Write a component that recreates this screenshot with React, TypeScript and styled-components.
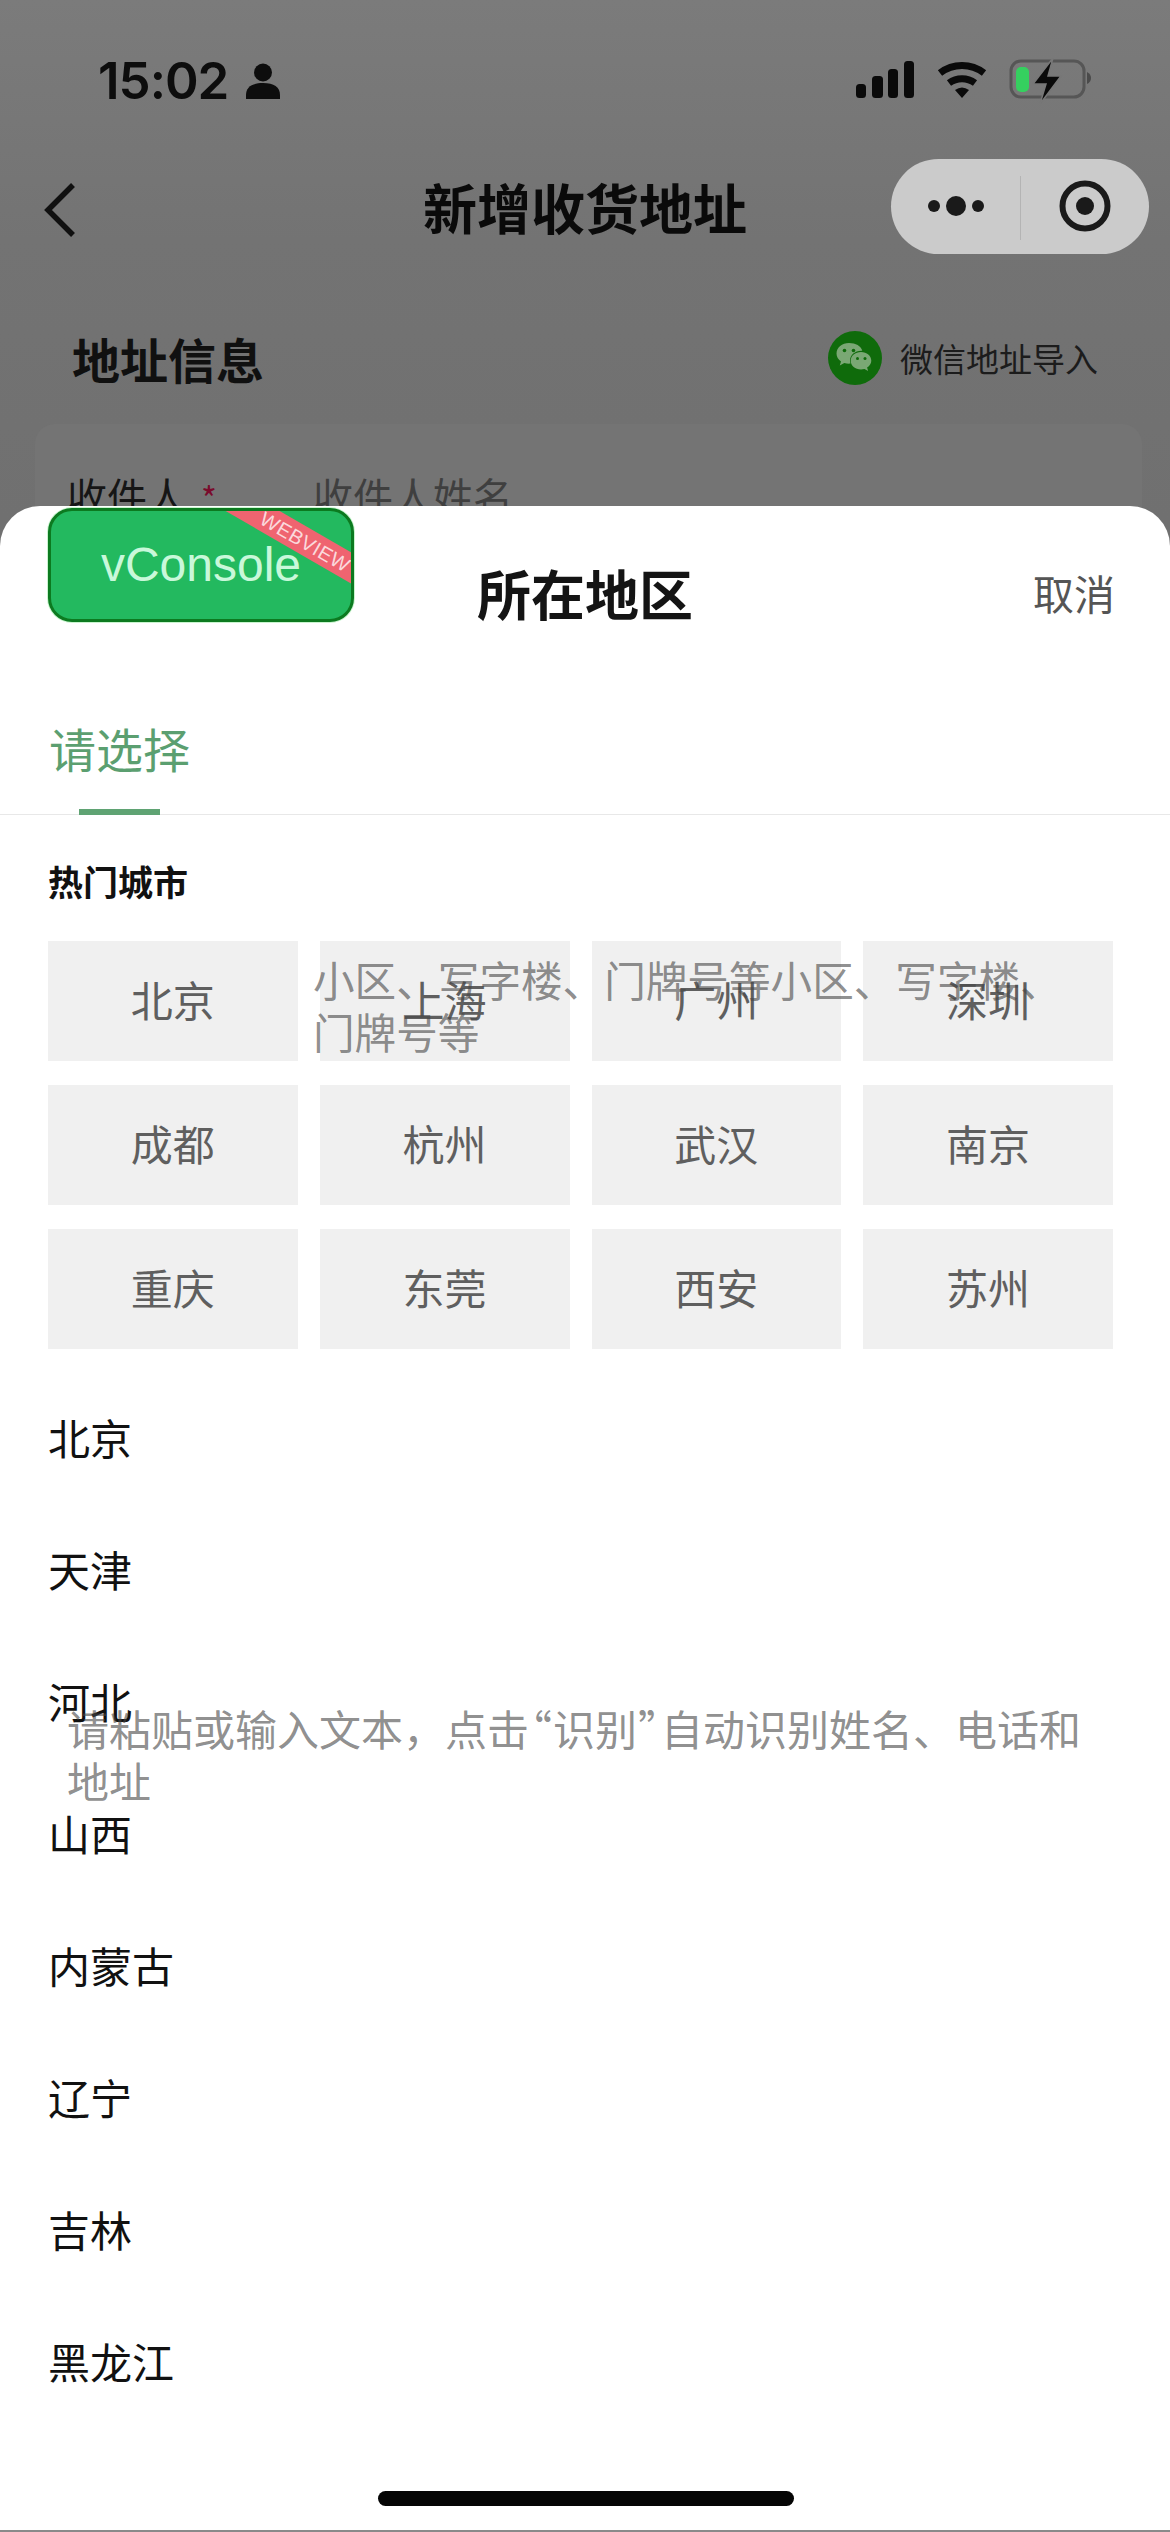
import React from "react";
import styled, { createGlobalStyle } from "styled-components";

const CJK = `"Noto Sans CJK SC", "Noto Sans", sans-serif`;

const Global = createGlobalStyle`
  html, body { margin: 0; padding: 0; background: #fff; }
  * { box-sizing: border-box; }
`;

const Page = styled.div`
  position: relative;
  width: 1170px;
  height: 2532px;
  overflow: hidden;
  font-family: ${CJK};
  background: linear-gradient(180deg, #7b7b7b 0, #737373 240px, #707070 520px);
`;

const StatusBar = styled.div`
  height: 159px;
  padding: 54px 0 0 98px;
  display: flex;
  align-items: flex-start;
  justify-content: space-between;
`;
const Clock = styled.div`
  display: flex;
  align-items: center;
  gap: 18px;
  font: 600 51px/54px Inter, "Liberation Sans", sans-serif;
  letter-spacing: -1px;
  color: #0d0d0d;
`;
const StatusIcons = styled.svg`
  display: block;
  margin: 4px 74px 0 0;
`;

const NavBar = styled.div`
  position: relative;
  height: 95px;
  padding: 0 21px 0 44px;
  display: flex;
  align-items: center;
  justify-content: space-between;
`;
const NavTitle = styled.div`
  position: absolute;
  left: 0;
  right: 0;
  text-align: center;
  font-size: 54px;
  line-height: 95px;
  font-weight: 700;
  color: #0a0a0a;
`;
const BackIcon = styled.svg`
  display: block;
  margin-top: 6px;
`;
const Capsule = styled.div`
  width: 258px;
  height: 95px;
  border-radius: 48px;
  background: #cbcbcb;
`;

const SectionHead = styled.div`
  margin-top: 59px;
  height: 90px;
  padding: 0 72px;
  display: flex;
  align-items: center;
  justify-content: space-between;
`;
const SectionTitle = styled.div`
  font-size: 48px;
  font-weight: 700;
  color: #101010;
`;
const ImportLink = styled.div`
  display: flex;
  align-items: center;
  gap: 18px;
  font-size: 33px;
  color: #1c1c1c;
`;

const FormCard = styled.div`
  margin: 21px 28px 0 35px;
  height: 300px;
  padding: 43px 32px 0;
  border-radius: 20px;
  background: #747474;
  display: flex;
  align-items: flex-start;
  font-size: 40px;
  line-height: 56px;
`;
const FieldLabel = styled.span`
  width: 246px;
  color: #161616;
`;
const Star = styled.span`
  margin-left: 14px;
  color: #7a0b2c;
  font-size: 34px;
`;
const FieldHint = styled.span`
  color: #3f3f3f;
`;

const Sheet = styled.div`
  position: absolute;
  left: 0;
  right: 0;
  top: 506px;
  bottom: 2px;
  background: #fff;
  border-radius: 40px 40px 0 0;
`;
const BottomEdge = styled.div`
  position: absolute;
  left: 0;
  right: 0;
  bottom: 0;
  height: 2px;
  background: #8a8a8a;
`;
const SheetHead = styled.div`
  position: relative;
  height: 178px;
  padding: 0 55px 6px 0;
  display: flex;
  align-items: center;
  justify-content: flex-end;
`;
const SheetTitle = styled.div`
  position: absolute;
  left: 0;
  right: 0;
  text-align: center;
  font-size: 54px;
  font-weight: 700;
  color: #141414;
`;
const Cancel = styled.div`
  font-size: 41px;
  color: #555;
`;
const Tabs = styled.div`
  height: 131px;
  padding: 30px 0 0 49px;
  border-bottom: 1px solid #e8e8e8;
  position: relative;
`;
const Tab = styled.div`
  font-size: 47px;
  line-height: 68px;
  color: #5b9f70;
`;
const TabLine = styled.div`
  position: absolute;
  left: 79px;
  bottom: -1px;
  width: 81px;
  height: 6px;
  background: #5fa373;
`;
const HotTitle = styled.div`
  margin-top: 41px;
  padding-left: 48px;
  font-size: 35px;
  line-height: 50px;
  font-weight: 700;
  color: #111;
`;
const HotGrid = styled.div`
  margin: 35px 57px 0 48px;
  display: grid;
  grid-template-columns: repeat(4, 1fr);
  gap: 24px 22px;
`;
const HotCell = styled.div`
  height: 120px;
  padding-bottom: 6px;
  background: #f0f0f0;
  display: flex;
  align-items: center;
  justify-content: center;
  font-size: 42px;
  color: #5f5f5f;
`;
const CityList = styled.div`
  margin-top: 24px;
  padding-left: 48px;
`;
const CityRow = styled.div`
  height: 132px;
  padding-bottom: 6px;
  display: flex;
  align-items: center;
  font-size: 42px;
  color: #111;
`;
const HomeBar = styled.div`
  position: absolute;
  left: 378px;
  bottom: 24px;
  width: 416px;
  height: 15px;
  border-radius: 8px;
  background: #050505;
`;

const Ghost = styled.div<{ $left: number; $top: number; $width: number; $size: number }>`
  position: absolute;
  left: ${(p) => p.$left}px;
  top: ${(p) => p.$top}px;
  width: ${(p) => p.$width}px;
  font-size: ${(p) => p.$size}px;
  line-height: 52px;
  color: rgba(70, 70, 70, 0.62);
`;
const Quote = styled.span`
  font-feature-settings: "palt";
  margin: 0 1.5px;
`;

const VConsole = styled.div`
  position: absolute;
  left: 48px;
  top: 508px;
  width: 306px;
  height: 114px;
  border: 3px solid #0c7a20;
  border-radius: 24px;
  background: #23b95f;
  box-shadow: 0 0 0 1px #c9f5cf;
  overflow: hidden;
  display: flex;
  align-items: center;
  justify-content: center;
  font: 400 48px/1 "Liberation Sans", Arial, sans-serif;
  color: #c9f8da;
`;
const Ribbon = styled.div`
  position: absolute;
  left: 146px;
  top: 15px;
  width: 210px;
  height: 27px;
  transform: rotate(30deg);
  background: #ef6470;
  display: flex;
  align-items: center;
  justify-content: center;
  padding-left: 8px;
  font: 400 20px/1 "Liberation Sans", Arial, sans-serif;
  letter-spacing: 0.5px;
  color: #fbd9dc;
`;

const hot = ["北京", "上海", "广州", "深圳", "成都", "杭州", "武汉", "南京", "重庆", "东莞", "西安", "苏州"];
const cities = ["北京", "天津", "河北", "山西", "内蒙古", "辽宁", "吉林", "黑龙江"];

const Person = () => (
  <svg width="34" height="36" viewBox="0 0 34 36">
    <circle cx="17" cy="9.5" r="9" fill="#0d0d0d" />
    <path d="M0 36v-4c0-8 6-12 17-12s17 4 17 12v4z" fill="#0d0d0d" />
  </svg>
);

const Status = () => (
  <StatusIcons width="240" height="46" viewBox="856 56 240 46">
    <rect x="856" y="82" width="10" height="14" rx="3.500" fill="#0a0a0a" />
    <rect x="872" y="74" width="11" height="22" rx="3.500" fill="#0a0a0a" />
    <rect x="888" y="67" width="10" height="29" rx="3.500" fill="#0a0a0a" />
    <rect x="904" y="59" width="10" height="37" rx="3.500" fill="#0a0a0a" />
    <path d="M940 71a36 36 0 0 1 44 0" fill="none" stroke="#0a0a0a" strokeWidth="7" />
    <path d="M949 81a22 22 0 0 1 26 0" fill="none" stroke="#0a0a0a" strokeWidth="7" />
    <path d="M955 88q7-5 14 0l-7 8z" fill="#0a0a0a" />
    <rect x="1011" y="59" width="73" height="36" rx="10" fill="none" stroke="#565656" strokeWidth="3" />
    <rect x="1016" y="65" width="13" height="25" rx="5" fill="#35d05f" />
    <path d="M1087 70q4 2 4 6t-4 6z" fill="#4a4a4a" />
    <path d="M1053 56l-20 26h13l-6 20 21-28h-13z" fill="#0a0a0a" stroke="#777" strokeWidth="1.500" />
  </StatusIcons>
);

const Back = () => (
  <BackIcon width="32" height="56" viewBox="0 0 32 56">
    <path d="M29 3 4 28l25 25" fill="none" stroke="#101010" strokeWidth="5.500" />
  </BackIcon>
);

const CapsuleArt = () => (
  <svg width="258" height="95" viewBox="891 159 258 95">
    <circle cx="934" cy="206" r="6" fill="#1a1a1a" />
    <circle cx="956" cy="206" r="10" fill="#1a1a1a" />
    <circle cx="978" cy="206" r="6" fill="#1a1a1a" />
    <rect x="1020" y="176" width="1" height="64" fill="#b4b4b4" />
    <circle cx="1085" cy="206" r="22.500" fill="none" stroke="#1a1a1a" strokeWidth="6" />
    <circle cx="1085" cy="206" r="9" fill="#1a1a1a" />
  </svg>
);

const WeChat = () => (
  <svg width="54" height="54" viewBox="0 0 54 54">
    <circle cx="27" cy="27" r="27" fill="#0f6b0b" />
    <path d="M21 12c-7 0-12.500 4.500-12.500 10.500 0 3.300 1.700 6 4.500 8l-1.200 4 4.500-2.400c1.500.4 3 .6 4.700.6.500 0 1 0 1.500-.1-.3-1-.5-2-.5-3 0-5.500 5-9.800 11.300-9.800h1C33 15 27.700 12 21 12z" fill="#7aa874" />
    <path d="M33 21c-5.800 0-10.300 3.800-10.300 8.700s4.500 8.700 10.300 8.700c1.200 0 2.400-.2 3.500-.5l3.600 2-1-3.400c2.500-1.600 4.200-4.100 4.200-6.800 0-4.900-4.500-8.700-10.300-8.700z" fill="#7aa874" />
    <circle cx="16.500" cy="19.500" r="1.800" fill="#0f6b0b" />
    <circle cx="25.500" cy="19.500" r="1.800" fill="#0f6b0b" />
    <circle cx="29.500" cy="27.500" r="1.500" fill="#0f6b0b" />
    <circle cx="37" cy="27.500" r="1.500" fill="#0f6b0b" />
  </svg>
);

export default function App() {
  return (
    <Page>
      <Global />
      <StatusBar>
        <Clock>
          15:02
          <Person />
        </Clock>
        <Status />
      </StatusBar>
      <NavBar>
        <Back />
        <NavTitle>新增收货地址</NavTitle>
        <Capsule>
          <CapsuleArt />
        </Capsule>
      </NavBar>
      <SectionHead>
        <SectionTitle>地址信息</SectionTitle>
        <ImportLink>
          <WeChat />
          微信地址导入
        </ImportLink>
      </SectionHead>
      <FormCard>
        <FieldLabel>
          收件人<Star>*</Star>
        </FieldLabel>
        <FieldHint>收件人姓名</FieldHint>
      </FormCard>

      <Sheet>
        <SheetHead>
          <SheetTitle>所在地区</SheetTitle>
          <Cancel>取消</Cancel>
        </SheetHead>
        <Tabs>
          <Tab>请选择</Tab>
          <TabLine />
        </Tabs>
        <HotTitle>热门城市</HotTitle>
        <HotGrid>
          {hot.map((c) => (
            <HotCell key={c}>{c}</HotCell>
          ))}
        </HotGrid>
        <CityList>
          {cities.map((c) => (
            <CityRow key={c}>{c}</CityRow>
          ))}
        </CityList>
        <HomeBar />
      </Sheet>
      <BottomEdge />

      <Ghost $left={313} $top={953} $width={765} $size={41.6}>
        小区、写字楼、门牌号等小区、写字楼、门牌号等
      </Ghost>
      <Ghost $left={67} $top={1702} $width={1040} $size={42}>
        请粘贴或输入文本，点击<Quote>“</Quote>识别<Quote>”</Quote>自动识别姓名、电话和地址
      </Ghost>

      <VConsole>
        vConsole
        <Ribbon>WEBVIEW</Ribbon>
      </VConsole>
    </Page>
  );
}
